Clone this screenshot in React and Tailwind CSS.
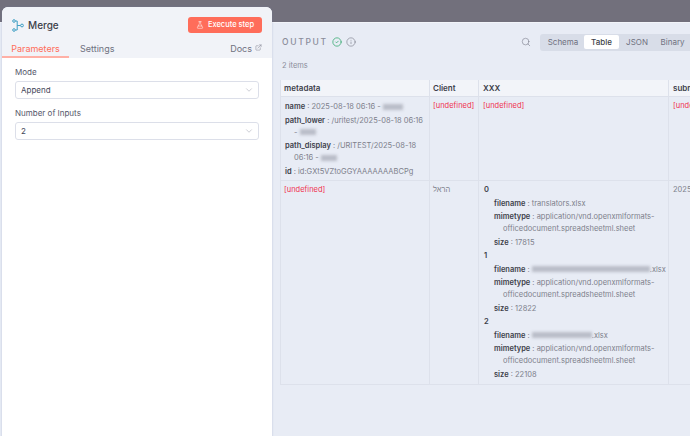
import React from 'react';
import { ChevronDown, Search, FlaskConical, ExternalLink, CircleCheck, Info } from 'lucide-react';

const Blur = ({ w }) => (
  <span className={`inline-block h-[6px] align-middle bg-[#b9bdc8] blur-[1.5px] ${w}`} />
);

const Undef = () => <span className="text-[#f0324f]">[undefined]</span>;

const Prop = ({ name, children }) => (
  <div className="pl-[9px] -indent-[9px] mb-[1.5px]">
    <span className="font-semibold text-[#3d3f4a]">{name}</span>
    <span className="text-[#7d7f8b]"> : {children}</span>
  </div>
);

const MergeIcon = () => (
  <svg width="12" height="13" viewBox="0 0 12 13" fill="none" stroke="#3f9fc4" strokeWidth="1">
    <circle cx="2" cy="2" r="1.3" />
    <circle cx="2" cy="11" r="1.3" />
    <circle cx="10" cy="6.5" r="1.4" />
    <path d="M3.4 2H5.2V11H3.4M5.2 6.5H8.5" />
  </svg>
);

const Select = ({ value }) => (
  <div className="h-[18px] mt-[4px] flex items-center justify-between bg-white border border-[#dcdfe9] rounded-[3px] pl-[5px] pr-[4px] text-[8px] text-[#45475a]">
    <span>{value}</span>
    <ChevronDown size={10} strokeWidth={1.2} className="text-[#9a9caa]" />
  </div>
);

const FileBlock = ({ idx, filename, size }) => (
  <div>
    <div className="font-semibold text-[#3d3f4a] mb-[1.5px]">{idx}</div>
    <div className="ml-[10px]">
      <Prop name="filename">{filename}</Prop>
      <Prop name="mimetype">application/vnd.openxmlformats-officedocument.spreadsheetml.sheet</Prop>
      <Prop name="size">{size}</Prop>
    </div>
  </div>
);

export default function App() {
  return (
    <div className="w-[690px] h-[436px] overflow-hidden bg-[#e8ecf5] flex flex-col font-['Inter',sans-serif]">
      <div className="h-[22px] shrink-0 bg-[#72707c]" />
      <div className="flex-1 min-h-0 flex border-t border-[#f2f4f9]">
        {/* left node panel */}
        <div className="relative w-[270px] ml-[2px] -mt-[16px] h-[430px] shrink-0 bg-white rounded-t-[6px] overflow-hidden shadow-[0_0_2px_rgba(120,130,170,0.45)]">
          <div className="bg-[#f1f3f8] h-[51px] flex flex-col">
            <div className="flex items-center justify-between px-[10px] pt-[10px]">
              <div className="flex items-center gap-[4px]">
                <MergeIcon />
                <span className="text-[10px] font-medium text-[#3d3f4a]">Merge</span>
              </div>
              <div className="w-[74px] h-[16px] bg-[#ff6d5a] rounded-[3px] flex items-center justify-center gap-[4px] text-white text-[7.5px] font-medium">
                <FlaskConical size={8} strokeWidth={1.5} />
                Execute step
              </div>
            </div>
            <div className="flex items-end justify-between mt-auto text-[9px]">
              <div className="flex">
                <div className="w-[67px] h-[17px] text-center leading-[15px] text-[#ff6d5a] border-b-2 border-[#ffb0a6]">Parameters</div>
                <div className="ml-[11px] leading-[15px] h-[17px] text-[#6f7180]">Settings</div>
              </div>
              <div className="pr-[10px] h-[17px] leading-[15px] text-[#6f7180] flex items-start gap-[3px]">
                Docs
                <ExternalLink size={7} strokeWidth={1.5} className="mt-[3px]" />
              </div>
            </div>
          </div>
          <div className="px-[13px] pt-[9px] text-[8px] text-[#55576a]">
            <div className="leading-[10px]">Mode</div>
            <Select value="Append" />
            <div className="leading-[10px] mt-[9px]">Number of Inputs</div>
            <Select value="2" />
          </div>
        </div>

        {/* output pane */}
        <div className="flex-1 min-w-0 pl-[8px] overflow-hidden">
          <div className="flex items-center justify-between h-[38px] pl-[2px]">
            <div className="flex items-center gap-[4px]">
              <span className="text-[8.5px] tracking-[1.7px] text-[#8b8d9a] font-medium">OUTPUT</span>
              <CircleCheck size={10} strokeWidth={1.8} className="text-[#2fa86c]" />
              <Info size={10} strokeWidth={1.2} className="text-[#5f616e]" />
            </div>
            <div className="flex items-center gap-[9px] -mr-[2px]">
              <Search size={10} strokeWidth={1.3} className="text-[#6f7180]" />
              <div className="w-[152px] h-[17px] bg-[#d8dde8] rounded-[3px] flex items-center pl-[2px] text-[8px] text-[#6f7180] overflow-hidden shrink-0">
                <span className="w-[42px] text-center">Schema</span>
                <span className="w-[35px] h-[14px] leading-[14px] text-center bg-white rounded-[2px] font-medium text-[#3d3f4a]">Table</span>
                <span className="w-[36px] text-center">JSON</span>
                <span className="w-[35px] text-center">Binary</span>
              </div>
            </div>
          </div>
          <div className="text-[7.5px] text-[#8b8d9a] leading-[9px] pl-[2px] mb-[10px]">2 items</div>

          <div className="grid grid-cols-[150px_49px_190px_40px] w-[429px] text-[7.5px] leading-[12px] text-[#7d7f8b] border-b border-[#dde1eb]">
            {/* header */}
            <div className="h-[17px] bg-[#f2f4f9] border-b border-[#dde1eb] border-x px-[3px] flex items-center text-[8px] font-semibold text-[#3d3f4a]">metadata</div>
            <div className="h-[17px] bg-[#f2f4f9] border-b border-[#dde1eb] border-r px-[3px] flex items-center text-[8px] font-semibold text-[#3d3f4a]">Client</div>
            <div className="h-[17px] bg-[#f2f4f9] border-b border-[#dde1eb] border-r px-[4px] flex items-center text-[8px] font-semibold text-[#3d3f4a]">XXX</div>
            <div className="h-[17px] bg-[#f2f4f9] border-b border-[#dde1eb] px-[4px] flex items-center text-[8px] font-semibold text-[#3d3f4a] whitespace-nowrap overflow-hidden">submitted</div>

            {/* row 1 */}
            <div className="h-[84px] border-x border-b border-[#dde1eb] pl-[4px] pr-[2px] pt-[4px]">
              <Prop name="name">2025-08-18 06:16 - <Blur w="w-[20px]" /></Prop>
              <Prop name="path_lower">/uritest/2025-08-18 06:16 - <Blur w="w-[16px]" /></Prop>
              <Prop name="path_display">/URITEST/2025-08-18 06:16 - <Blur w="w-[16px]" /></Prop>
              <Prop name="id">id:GXt5VZtoGGYAAAAAAABCPg</Prop>
            </div>
            <div className="border-r border-b border-[#dde1eb] px-[3px] pt-[3px]"><Undef /></div>
            <div className="border-r border-b border-[#dde1eb] px-[4px] pt-[3px]"><Undef /></div>
            <div className="border-b border-[#dde1eb] px-[4px] pt-[3px] whitespace-nowrap overflow-hidden"><Undef /></div>

            {/* row 2 */}
            <div className="h-[203px] border-x border-[#dde1eb] px-[3px] pt-[3px]"><Undef /></div>
            <div className="border-r border-[#dde1eb] px-[3px] pt-[3px]"><span dir="rtl">הראל</span></div>
            <div className="border-r border-[#dde1eb] pl-[5px] pr-[2px] pt-[3px]">
              <FileBlock idx="0" filename="translators.xlsx" size="17815" />
              <FileBlock idx="1" filename={<><Blur w="w-[118px]" />.xlsx</>} size="12822" />
              <FileBlock idx="2" filename={<><Blur w="w-[60px]" />.xlsx</>} size="22108" />
            </div>
            <div className="px-[4px] pt-[3px] whitespace-nowrap overflow-hidden">2025-08-18</div>
          </div>
        </div>
      </div>
    </div>
  );
}
